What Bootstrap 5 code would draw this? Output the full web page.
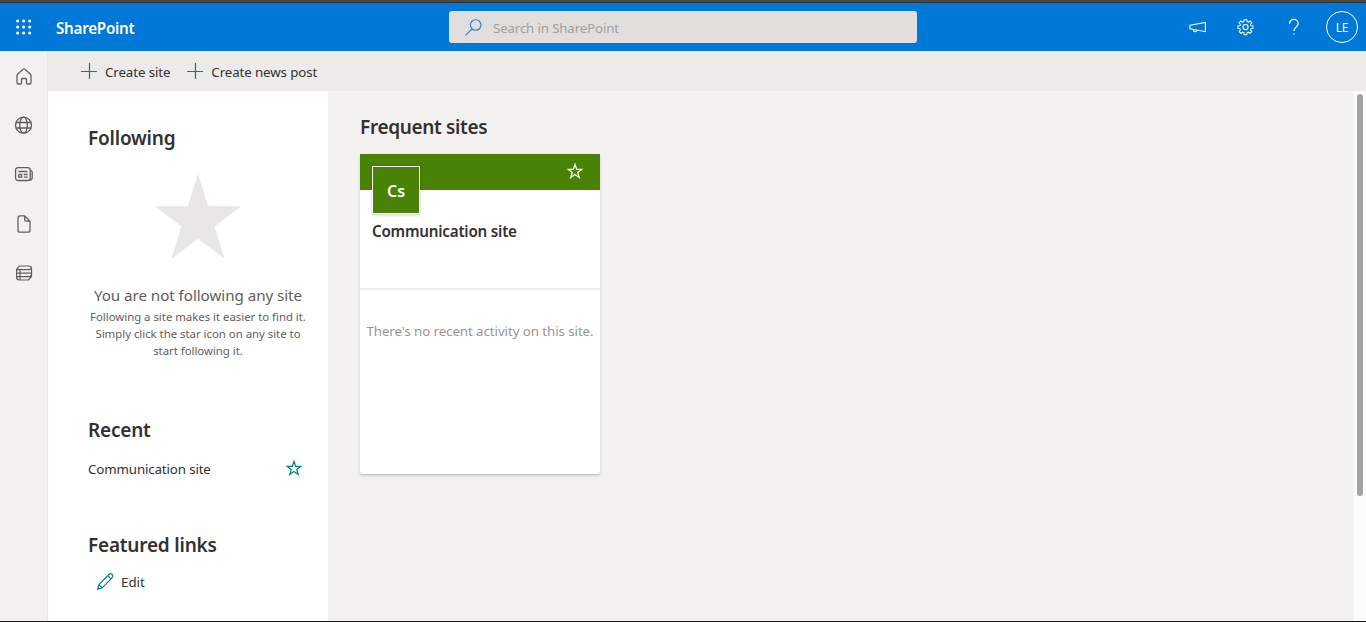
<!DOCTYPE html>
<html lang="en">
<head>
<meta charset="utf-8">
<meta name="viewport" content="width=device-width, initial-scale=1">
<title>SharePoint</title>
<link href="https://cdn.jsdelivr.net/npm/bootstrap@5.3.0/dist/css/bootstrap.min.css" rel="stylesheet">
<style>
body{font-family:"Noto Sans","Open Sans",sans-serif;font-size:13.3px;line-height:20px;color:#323130;background:#f3f2f1;height:622px}
svg{display:block;flex:none}
.window-edge{height:3px;background:#484848;border-bottom:1px solid #30363b}
.suite{height:48px;background:#0078d7}
.suite-left{width:449px}
.launcher{width:48px;padding-left:16px;padding-bottom:1px}
.brand{font-size:15.2px;font-weight:600;margin-left:8px;padding-top:2px;letter-spacing:-.25px}
.searchbox{width:468px;height:32px;background:#e1dfdd;border-radius:3px;color:#a19f9d;padding-left:16px}
.searchbox span{margin-left:11px;padding-top:2px;letter-spacing:-.15px}
.suite-right{padding-right:8px}
.persona{width:32px;height:32px;border:1px solid #fff;font-size:12px;padding-top:2px;letter-spacing:-.2px}
.help-icon{margin:0 26px 0 34px}
.gear-icon{margin-left:30px}
.rail{width:48px;border-right:1px solid #e9e8e7;padding-top:16px;color:#605e5c}
.rail a{height:49.2px;color:inherit}
.commands{height:40px;background:#edebe9;padding:2px 0 0 33px;gap:17px}
.commands svg{margin:-2px 8px 0 0}
.commands span{letter-spacing:-.1px}
.side{width:280px;background:#fff;padding:37px 23px 0 40px}
.heading{font-size:19px;font-weight:600;line-height:20px;margin:0;letter-spacing:-.2px}
.recent-heading{margin-top:61px}
.featured-heading{margin-top:56px}
.recent-row{margin-top:19px;letter-spacing:-.13px}
.edit-row{margin-top:17px;padding-left:9px}
.edit-row svg{margin:-2px 7px 0 0}
.big-star{margin:23px 0 26px}
.star-icon{margin:-3px 3px 0 0}
.empty-title{font-size:15.2px;line-height:20px;color:#605e5c;letter-spacing:-.06px}
.empty-text{font-size:11.4px;line-height:17px;color:#605e5c;margin-top:3px;letter-spacing:-.02px}
.empty-state{width:220px}
.main-area{padding:26px 32px 0}
.main-area .heading{letter-spacing:-.34px}
.site-card{width:240px;height:320px;margin-top:17px;border:0;border-radius:2px;box-shadow:0 1.6px 3.6px rgba(0,0,0,.132),0 .3px .9px rgba(0,0,0,.108)}
.banner{height:36px;background:#498205;padding:0 17px 2px 0}
.site-info{height:98px}
.tile{width:48px;height:48px;left:12px;top:12px;background:#498205;border:1px solid #fff;font-size:16px;font-weight:600;box-shadow:0 1px 3px rgba(0,0,0,.2);padding-top:2px}
.site-title{font-size:15.2px;font-weight:600;padding:31px 12px 0;letter-spacing:-.22px}
.activity{border-top:2px solid #edebe9;color:#979593;padding-top:31px;letter-spacing:-.07px}
.scroll{width:12px;background:#fcfcfc;padding:3px 3px 0}
.thumb{width:6px;height:402px;border-radius:3px;background:#a3a3a3}
.bottom-edge{height:1px;background:#1b1b1b}
.teal{color:#038387}
</style>
</head>
<body class="d-flex flex-column overflow-hidden">
<div class="window-edge flex-shrink-0"></div>
<header class="suite d-flex align-items-center text-white flex-shrink-0">
  <div class="suite-left d-flex align-items-center">
    <div class="launcher"><svg width="16" height="16" fill="currentColor"><circle cx="1.7" cy="2" r="1.6"/><circle cx="7.7" cy="2" r="1.6"/><circle cx="13.7" cy="2" r="1.6"/><circle cx="1.7" cy="8" r="1.6"/><circle cx="7.7" cy="8" r="1.6"/><circle cx="13.7" cy="8" r="1.6"/><circle cx="1.7" cy="14" r="1.6"/><circle cx="7.7" cy="14" r="1.6"/><circle cx="13.7" cy="14" r="1.6"/></svg></div>
    <span class="brand text-nowrap">SharePoint</span>
  </div>
  <div class="searchbox d-flex align-items-center">
    <svg width="17" height="17" fill="none" stroke="#2b7cc4" stroke-width="1.1"><circle cx="10.7" cy="6" r="5.3"/><path d="M7 9.8.5 16.3"/></svg>
    <span class="text-nowrap">Search in SharePoint</span>
  </div>
  <div class="suite-right d-flex align-items-center ms-auto">
    <svg width="18" height="16" fill="none" stroke="currentColor" stroke-width="1.1"><path d="M.9 6.200 16.400 3.500v9.200L.9 9.800zM4.300 10.500v.5a2 2 0 0 0 3.800.6v-.4"/></svg>
    <svg class="gear-icon" width="17" height="18" viewBox="-.5 -1 17 18" fill="none" stroke="currentColor" stroke-width="1.05"><circle cx="8" cy="8" r="2.600"/><path d="m6.700.700 2.600 0 .4 2 1.100.5 1.800-1.200 1.600 1.700-1.200 1.800.5 1.200 2 .2v2.500l-2 .4-.5 1.100 1.200 1.800-1.600 1.600-1.800-1.100-1.100.4-.4 2H6.700l-.4-2-1.100-.4-1.800 1.100-1.700-1.600L2.900 10.900l-.5-1.100-2-.4V6.900l2-.2.5-1.200-1.200-1.800L3.400 2l1.800 1.200 1.100-.5z"/></svg>
    <svg class="help-icon" width="12" height="18" fill="none" stroke="currentColor" stroke-width="1.200"><path d="M1.500 5.800a4.300 4.300 0 0 1 8.700 0c0 3-4.300 3.300-4.300 7.300"/><path d="M5.300 16.200h1.300"/></svg>
    <div class="persona rounded-circle d-flex align-items-center justify-content-center">LE</div>
  </div>
</header>
<div class="d-flex flex-grow-1 overflow-hidden">
  <nav class="rail d-flex flex-column flex-shrink-0">
    <a class="d-flex justify-content-center"><svg width="20" height="20" fill="none" stroke="currentColor" stroke-width="1.300" stroke-linejoin="round"><path d="M3 8.500a2 2 0 0 1 .7-1.500l5.200-4.600a1.600 1.600 0 0 1 2.200 0L16.300 7a2 2 0 0 1 .7 1.500v7.300a1.200 1.200 0 0 1-1.200 1.200h-2.100a1.200 1.200 0 0 1-1.200-1.200V12.500a1 1 0 0 0-1-1h-3a1 1 0 0 0-1 1v3.300A1.200 1.200 0 0 1 6.300 17H4.200A1.200 1.200 0 0 1 3 15.800z"/></svg></a>
    <a class="d-flex justify-content-center"><svg width="20" height="20" fill="none" stroke="currentColor" stroke-width="1.300"><circle cx="9.500" cy="9.200" r="8"/><ellipse cx="9.500" cy="9.200" rx="3.800" ry="8"/><path d="M2 6.500h15m-15 5.500h15"/></svg></a>
    <a class="d-flex justify-content-center"><svg width="20" height="20" fill="none" stroke="currentColor" stroke-width="1.300"><rect x="1.600" y="2.700" width="14.600" height="12.800" rx="2.500"/><path d="M16.300 5.300a2 2 0 0 1 1.900 2v5.500a2.500 2.500 0 0 1-2.500 2.500M4.500 6.500h9M9.700 9.500h4M9.700 12.200h4"/><rect x="4.800" y="9.500" width="2.800" height="2.700"/></svg></a>
    <a class="d-flex justify-content-center"><svg width="20" height="20" fill="none" stroke="currentColor" stroke-width="1.300"><path d="M6 .900h4.700l5.300 5.300v9a2 2 0 0 1-2 2H6a2 2 0 0 1-2-2V2.900a2 2 0 0 1 2-2zM10.700 1.200v3.500a1.500 1.500 0 0 0 1.500 1.500H16"/></svg></a>
    <a class="d-flex justify-content-center"><svg width="20" height="20" fill="none" stroke="currentColor" stroke-width="1.200"><path d="M5.300 2h9.500a2.700 2.700 0 0 1 2.700 2.700v7.800l-3 3.500H5.300a2.700 2.700 0 0 1-2.700-2.700V5.200zM2.700 5.700h12.800l2-1.700M2.700 9.200h14.800M2.700 12.700h13l1.800-1.700M6 5.700v10.300"/></svg></a>
  </nav>
  <div class="d-flex flex-column flex-grow-1">
    <div class="commands d-flex align-items-center flex-shrink-0">
      <div class="d-flex align-items-center"><svg class="teal" width="16" height="16" stroke="currentColor" stroke-width="1.200"><path d="M8.500 0v16M0 8.500h16"/></svg><span class="text-nowrap">Create site</span></div>
      <div class="d-flex align-items-center"><svg class="teal" width="16" height="16" stroke="currentColor" stroke-width="1.200"><path d="M8.500 0v16M0 8.500h16"/></svg><span class="text-nowrap">Create news post</span></div>
    </div>
    <div class="d-flex flex-grow-1">
      <aside class="side flex-shrink-0">
        <h2 class="heading">Following</h2>
        <div class="empty-state d-flex flex-column align-items-center text-center">
          <svg class="big-star" width="86" height="88" viewBox="0 0 86 88" fill="#e8e7e6"><path d="m43 3 10.200 32.200H86L59.500 55.500 69.700 88 43 67.700 16.300 88 26.500 55.500 0 35.200h32.800z"/></svg>
          <div class="empty-title text-nowrap">You are not following any site</div>
          <div class="empty-text text-nowrap">Following a site makes it easier to find it.<br>Simply click the star icon on any site to<br>start following it.</div>
        </div>
        <h2 class="heading recent-heading">Recent</h2>
        <div class="recent-row d-flex align-items-center justify-content-between"><span>Communication site</span>
          <svg class="teal star-icon" width="16" height="16" fill="none" stroke="currentColor" stroke-width="1.200"><path d="m8 1.300 1.700 5h5.200l-4.200 3.200 1.600 5L8 11.400l-4.300 3.100 1.600-5L1.100 6.300h5.200z"/></svg></div>
        <h2 class="heading featured-heading">Featured links</h2>
        <div class="edit-row d-flex align-items-center">
          <svg class="teal" width="17" height="17" fill="none" stroke="currentColor" stroke-width="1.200"><path d="m.700 16.300 1.200-4.700L12 1.500a2.100 2.100 0 0 1 3.200 3.200L5.200 14.800zM1.900 11.600l3.300 3.200M10.800 2.700l3.200 3.200"/></svg>
          <span>Edit</span></div>
      </aside>
      <main class="main-area flex-grow-1">
        <h2 class="heading">Frequent sites</h2>
        <div class="site-card card">
          <div class="banner d-flex align-items-center justify-content-end text-white"><svg width="16" height="16" fill="none" stroke="currentColor" stroke-width="1.200"><path d="m8 1.300 1.700 5h5.200l-4.200 3.200 1.600 5L8 11.400l-4.300 3.100 1.600-5L1.100 6.300h5.200z"/></svg></div>
          <div class="tile position-absolute text-white d-flex align-items-center justify-content-center">Cs</div>
          <div class="site-info"><div class="site-title text-nowrap">Communication site</div></div>
          <div class="activity text-center text-nowrap">There's no recent activity on this site.</div>
        </div>
      </main>
      <div class="scroll flex-shrink-0"><div class="thumb"></div></div>
    </div>
  </div>
</div>
<div class="bottom-edge flex-shrink-0"></div>
<script src="https://cdn.jsdelivr.net/npm/bootstrap@5.3.0/dist/js/bootstrap.bundle.min.js"></script>
</body>
</html>
